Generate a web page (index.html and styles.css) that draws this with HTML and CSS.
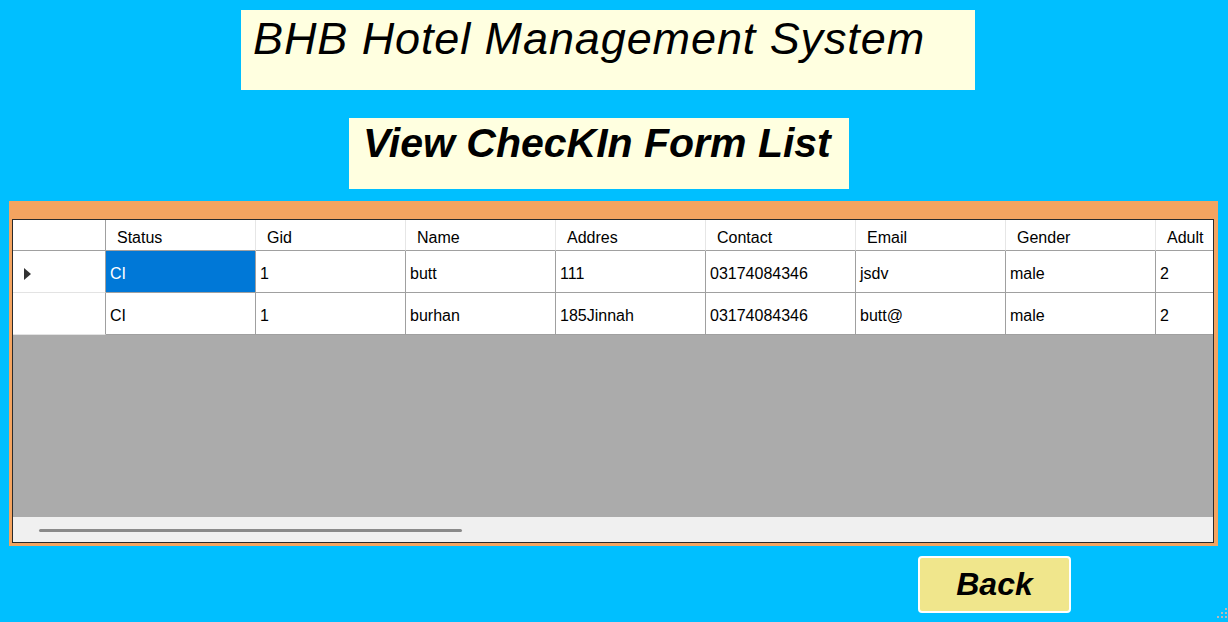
FILE: index.html
```html
<!DOCTYPE html>
<html>
<head>
<meta charset="utf-8">
<title>View CheckIn Form List</title>
<link rel="stylesheet" href="styles.css">
</head>
<body>
<div class="form">
  <header class="titles">
    <div class="title-box main"><h1>BHB Hotel Management System</h1></div>
    <div class="title-box sub"><h2>View ChecKIn Form List</h2></div>
  </header>

  <section class="panel">
    <div class="grid">
      <div class="rows">
        <div class="row head">
          <div class="cell rh"></div>
          <div class="cell">Status</div>
          <div class="cell">Gid</div>
          <div class="cell">Name</div>
          <div class="cell">Addres</div>
          <div class="cell">Contact</div>
          <div class="cell">Email</div>
          <div class="cell">Gender</div>
          <div class="cell">Adult</div>
        </div>
        <div class="row">
          <div class="cell rh"><span class="cur"></span></div>
          <div class="cell sel">CI</div>
          <div class="cell">1</div>
          <div class="cell">butt</div>
          <div class="cell">111</div>
          <div class="cell">03174084346</div>
          <div class="cell">jsdv</div>
          <div class="cell">male</div>
          <div class="cell">2</div>
        </div>
        <div class="row">
          <div class="cell rh"></div>
          <div class="cell">CI</div>
          <div class="cell">1</div>
          <div class="cell">burhan</div>
          <div class="cell">185Jinnah</div>
          <div class="cell">03174084346</div>
          <div class="cell">butt@</div>
          <div class="cell">male</div>
          <div class="cell">2</div>
        </div>
      </div>
      <div class="empty"></div>
      <div class="hscroll"><div class="thumb"></div></div>
    </div>
  </section>

  <div class="actions">
    <button class="back">Back</button>
  </div>

  <div class="grip">
    <span class="dot d1"></span>
    <span class="dot d2"></span><span class="dot d3"></span>
    <span class="dot d4"></span><span class="dot d5"></span><span class="dot d6"></span>
  </div>
</div>
</body>
</html>
```

FILE: styles.css
```css
html, body {
  margin: 0;
  padding: 0;
}

body {
  width: 1228px;
  height: 622px;
  overflow: hidden;
  background: #00bfff;
  font-family: "Liberation Sans", Arial, sans-serif;
}

.form {
  position: relative;
  width: 1228px;
  height: 622px;
  padding-top: 10px;
  box-sizing: border-box;
}

.title-box {
  background: #ffffe0;
  box-sizing: border-box;
}

.title-box.main {
  margin-left: 241px;
  width: 734px;
  height: 80px;
  padding: 6px 0 0 12px;
}

.title-box.sub {
  margin-left: 349px;
  margin-top: 28px;
  width: 500px;
  height: 71px;
  padding: 5px 0 0 14px;
}

.title-box h1,
.title-box h2 {
  margin: 0;
  line-height: 1;
  font-style: italic;
  color: #000;
  white-space: nowrap;
}

.title-box h1 {
  font-size: 45px;
  font-weight: normal;
  letter-spacing: 0.9px;
}

.title-box h2 {
  font-size: 41px;
  font-weight: bold;
}

.panel {
  margin-top: 12px;
  margin-left: 9px;
  width: 1209px;
  height: 345px;
  box-sizing: border-box;
  padding: 18px 4px 3px 3px;
  background: #f4a460;
}

.grid {
  height: 100%;
  box-sizing: border-box;
  border: 1px solid #2a2a2a;
  background: #ababab;
  display: flex;
  flex-direction: column;
  overflow: hidden;
}

.rows {
  width: 1200px;
  overflow: hidden;
  flex: none;
}

.row {
  display: flex;
  height: 42px;
  width: 1293px;
  font-size: 16px;
  color: #000;
}

.row.head {
  height: 31px;
}

.cell {
  flex: none;
  width: 150px;
  box-sizing: border-box;
  background: #fff;
  border-right: 1px solid #a0a0a0;
  border-bottom: 1px solid #a0a0a0;
  padding: 4px 0 0 4px;
  display: flex;
  align-items: center;
  white-space: nowrap;
  overflow: hidden;
}

.row.head .cell {
  border-right-color: #e6e6e6;
  padding: 5px 0 0 11px;
}

.cell.rh {
  width: 93px;
  border-right-color: #a0a0a0 !important;
  padding: 4px 0 0 11px;
}

.row:not(.head) .cell.rh {
  border-bottom-color: #e3e3e3;
}

.cell.sel {
  background: #0078d7;
  color: #fff;
}

.cur {
  display: block;
  width: 0;
  height: 0;
  border-top: 6px solid transparent;
  border-bottom: 6px solid transparent;
  border-left: 7px solid #333;
  margin-top: 1px;
}

.empty {
  flex: 1;
}

.hscroll {
  height: 25px;
  flex: none;
  background: #f0f0f0;
  padding: 12px 0 0 26px;
  box-sizing: border-box;
}

.thumb {
  width: 423px;
  height: 3px;
  border-radius: 2px;
  background: #8a8a8a;
}

.actions {
  margin-top: 10px;
  margin-left: 918px;
}

.back {
  width: 153px;
  height: 57px;
  box-sizing: border-box;
  border: 2px solid #fff;
  border-radius: 4px;
  background: #f0e68c;
  font-family: "Liberation Sans", Arial, sans-serif;
  font-size: 32px;
  font-weight: bold;
  font-style: italic;
  color: #000;
  padding: 0;
  cursor: pointer;
}

.grip {
  position: absolute;
  right: 1px;
  bottom: 2px;
  width: 12px;
  height: 12px;
}

.dot {
  position: absolute;
  width: 2px;
  height: 2px;
  background: #b8b8b8;
}
.d1 { right: 0; top: 0; }
.d2 { right: 4px; top: 4px; }
.d3 { right: 0; top: 4px; }
.d4 { right: 8px; top: 8px; }
.d5 { right: 4px; top: 8px; }
.d6 { right: 0; top: 8px; }
```
